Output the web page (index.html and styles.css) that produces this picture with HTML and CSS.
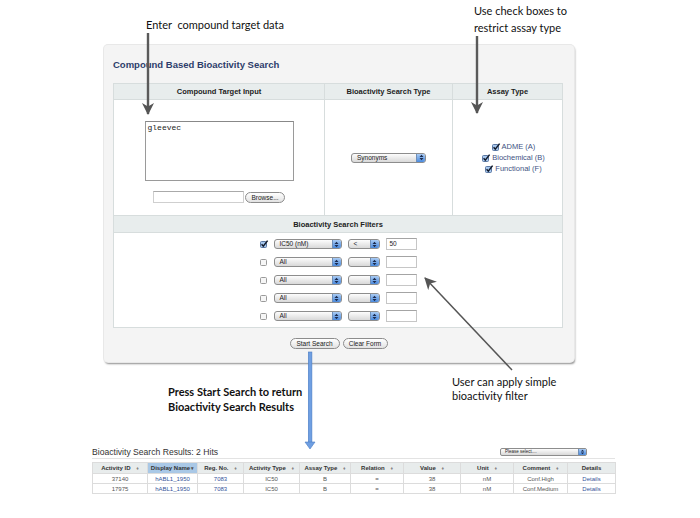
FILE: index.html
```html
<!DOCTYPE html>
<html>
<head>
<meta charset="utf-8">
<title>Compound Based Bioactivity Search</title>
<link rel="stylesheet" href="styles.css">
</head>
<body>
<div class="page">
  <div class="note note-enter">Enter&nbsp; compound target data</div>
  <div class="note note-use">Use check boxes to<br>restrict assay type</div>
  <div class="note note-press">Press Start Search to return<br>Bioactivity Search Results</div>
  <div class="note note-user">User can apply simple<br>bioactivity filter</div>

  <div class="panel">
    <h1 class="panel-title">Compound Based Bioactivity Search</h1>
    <div class="grid">
      <div class="hd">Compound Target Input</div>
      <div class="hd">Bioactivity Search Type</div>
      <div class="hd">Assay Type</div>

      <div class="cell input-cell">
        <div class="textarea">gleevec</div>
        <div class="file-row"><div class="file-box"></div><div class="btn btn-browse">Browse...</div></div>
      </div>
      <div class="cell center-cell">
        <div class="sel sel-syn"><span class="sel-text">Synonyms</span><span class="step"><svg width="5" height="7" viewBox="0 0 5 7"><path d="M0.5 3 L2.5 0.8 L4.5 3 Z M0.5 4 L2.5 6.2 L4.5 4 Z" fill="#1b2a4d"/></svg></span></div>
      </div>
      <div class="cell center-cell assay-cell">
        <div class="checks">
          <div class="chk-line"><svg class="cb" width="8" height="8" viewBox="0 0 8 8"><rect x="0.5" y="1.5" width="6" height="6" rx="1" fill="#a8c8ee" stroke="#5b78a3"/><path d="M1.6 4.3 L3.3 6.2 L7.6 0.6" fill="none" stroke="#101828" stroke-width="1.5"/></svg>ADME (A)</div>
          <div class="chk-line"><svg class="cb" width="8" height="8" viewBox="0 0 8 8"><rect x="0.5" y="1.5" width="6" height="6" rx="1" fill="#a8c8ee" stroke="#5b78a3"/><path d="M1.6 4.3 L3.3 6.2 L7.6 0.6" fill="none" stroke="#101828" stroke-width="1.5"/></svg>Biochemical (B)</div>
          <div class="chk-line"><svg class="cb" width="8" height="8" viewBox="0 0 8 8"><rect x="0.5" y="1.5" width="6" height="6" rx="1" fill="#a8c8ee" stroke="#5b78a3"/><path d="M1.6 4.3 L3.3 6.2 L7.6 0.6" fill="none" stroke="#101828" stroke-width="1.5"/></svg>Functional (F)</div>
        </div>
      </div>

      <div class="hd hd-wide">Bioactivity Search Filters</div>
      <div class="filters">
        <div class="frow">
          <svg class="cb" width="8" height="8" viewBox="0 0 8 8"><rect x="0.5" y="1.5" width="6" height="6" rx="1" fill="#a8c8ee" stroke="#5b78a3"/><path d="M1.6 4.3 L3.3 6.2 L7.6 0.6" fill="none" stroke="#101828" stroke-width="1.5"/></svg>
          <div class="sel sel-a"><span class="sel-text">IC50 (nM)</span><span class="step"><svg width="5" height="7" viewBox="0 0 5 7"><path d="M0.5 3 L2.5 0.8 L4.5 3 Z M0.5 4 L2.5 6.2 L4.5 4 Z" fill="#1b2a4d"/></svg></span></div>
          <div class="sel sel-b"><span class="sel-text">&lt;</span><span class="step"><svg width="5" height="7" viewBox="0 0 5 7"><path d="M0.5 3 L2.5 0.8 L4.5 3 Z M0.5 4 L2.5 6.2 L4.5 4 Z" fill="#1b2a4d"/></svg></span></div>
          <div class="fin">50</div>
        </div>
        <div class="frow">
          <svg class="cb" width="8" height="8" viewBox="0 0 8 8"><rect x="0.5" y="1.5" width="6" height="6" rx="1" fill="#f6f6f6" stroke="#9a9a9a"/></svg>
          <div class="sel sel-a"><span class="sel-text">All</span><span class="step"><svg width="5" height="7" viewBox="0 0 5 7"><path d="M0.5 3 L2.5 0.8 L4.5 3 Z M0.5 4 L2.5 6.2 L4.5 4 Z" fill="#1b2a4d"/></svg></span></div>
          <div class="sel sel-b"><span class="sel-text"></span><span class="step"><svg width="5" height="7" viewBox="0 0 5 7"><path d="M0.5 3 L2.5 0.8 L4.5 3 Z M0.5 4 L2.5 6.2 L4.5 4 Z" fill="#1b2a4d"/></svg></span></div>
          <div class="fin"></div>
        </div>
        <div class="frow">
          <svg class="cb" width="8" height="8" viewBox="0 0 8 8"><rect x="0.5" y="1.5" width="6" height="6" rx="1" fill="#f6f6f6" stroke="#9a9a9a"/></svg>
          <div class="sel sel-a"><span class="sel-text">All</span><span class="step"><svg width="5" height="7" viewBox="0 0 5 7"><path d="M0.5 3 L2.5 0.8 L4.5 3 Z M0.5 4 L2.5 6.2 L4.5 4 Z" fill="#1b2a4d"/></svg></span></div>
          <div class="sel sel-b"><span class="sel-text"></span><span class="step"><svg width="5" height="7" viewBox="0 0 5 7"><path d="M0.5 3 L2.5 0.8 L4.5 3 Z M0.5 4 L2.5 6.2 L4.5 4 Z" fill="#1b2a4d"/></svg></span></div>
          <div class="fin"></div>
        </div>
        <div class="frow">
          <svg class="cb" width="8" height="8" viewBox="0 0 8 8"><rect x="0.5" y="1.5" width="6" height="6" rx="1" fill="#f6f6f6" stroke="#9a9a9a"/></svg>
          <div class="sel sel-a"><span class="sel-text">All</span><span class="step"><svg width="5" height="7" viewBox="0 0 5 7"><path d="M0.5 3 L2.5 0.8 L4.5 3 Z M0.5 4 L2.5 6.2 L4.5 4 Z" fill="#1b2a4d"/></svg></span></div>
          <div class="sel sel-b"><span class="sel-text"></span><span class="step"><svg width="5" height="7" viewBox="0 0 5 7"><path d="M0.5 3 L2.5 0.8 L4.5 3 Z M0.5 4 L2.5 6.2 L4.5 4 Z" fill="#1b2a4d"/></svg></span></div>
          <div class="fin"></div>
        </div>
        <div class="frow">
          <svg class="cb" width="8" height="8" viewBox="0 0 8 8"><rect x="0.5" y="1.5" width="6" height="6" rx="1" fill="#f6f6f6" stroke="#9a9a9a"/></svg>
          <div class="sel sel-a"><span class="sel-text">All</span><span class="step"><svg width="5" height="7" viewBox="0 0 5 7"><path d="M0.5 3 L2.5 0.8 L4.5 3 Z M0.5 4 L2.5 6.2 L4.5 4 Z" fill="#1b2a4d"/></svg></span></div>
          <div class="sel sel-b"><span class="sel-text"></span><span class="step"><svg width="5" height="7" viewBox="0 0 5 7"><path d="M0.5 3 L2.5 0.8 L4.5 3 Z M0.5 4 L2.5 6.2 L4.5 4 Z" fill="#1b2a4d"/></svg></span></div>
          <div class="fin"></div>
        </div>
      </div>
    </div>
    <div class="actions">
      <div class="btn btn-start">Start Search</div>
      <div class="btn btn-clear">Clear Form</div>
    </div>
  </div>

  <div class="results">
    <div class="res-head">
      <div class="res-title">Bioactivity Search Results: 2 Hits</div>
      <div class="sel sel-please"><span class="sel-text">Please select....</span><span class="step"><svg width="5" height="6" viewBox="0 0 5 7"><path d="M0.5 3 L2.5 0.8 L4.5 3 Z M0.5 4 L2.5 6.2 L4.5 4 Z" fill="#1b2a4d"/></svg></span></div>
    </div>
    <table class="rtable">
      <colgroup>
        <col class="c55"><col class="c50"><col class="c46"><col class="c56"><col class="c51"><col class="c53"><col class="c57"><col class="c53"><col class="c54"><col class="c48">
      </colgroup>
      <thead>
        <tr>
          <th>Activity ID <span class="sort">&#9830;</span></th>
          <th class="th-active">Display Name<span class="sort-on">&#9662;</span></th>
          <th>Reg. No. <span class="sort">&#9830;</span></th>
          <th>Activity Type <span class="sort">&#9830;</span></th>
          <th>Assay Type <span class="sort">&#9830;</span></th>
          <th>Relation <span class="sort">&#9830;</span></th>
          <th>Value <span class="sort">&#9830;</span></th>
          <th>Unit <span class="sort">&#9830;</span></th>
          <th>Comment <span class="sort">&#9830;</span></th>
          <th>Details</th>
        </tr>
      </thead>
      <tbody>
        <tr>
          <td>37140</td><td class="lnk">hABL1_1950</td><td class="lnk">7083</td><td>IC50</td><td>B</td><td>=</td><td>38</td><td>nM</td><td>Conf.High</td><td class="lnk">Details</td>
        </tr>
        <tr>
          <td>17975</td><td class="lnk">hABL1_1950</td><td class="lnk">7083</td><td>IC50</td><td>B</td><td>=</td><td>38</td><td>nM</td><td>Conf.Medium</td><td class="lnk">Details</td>
        </tr>
      </tbody>
    </table>
  </div>

  <svg class="arrows" width="700" height="518" viewBox="0 0 700 518">
    <defs>
      <marker id="ah" viewBox="0 0 12 12" refX="11" refY="6" markerWidth="12" markerHeight="12" markerUnits="userSpaceOnUse" orient="auto">
        <path d="M0 0 L12 6 L0 12 L3.5 6 Z" fill="#555"/>
      </marker>
    </defs>
    <line x1="148" y1="33" x2="148" y2="114" stroke="#5a5a5a" stroke-width="2.4" marker-end="url(#ah)"/>
    <line x1="477" y1="36" x2="477" y2="113" stroke="#5a5a5a" stroke-width="2.4" marker-end="url(#ah)"/>
    <line x1="512" y1="370" x2="425" y2="278" stroke="#555" stroke-width="1.5" marker-end="url(#ah)"/>
    <rect x="308.3" y="352" width="3.6" height="91" fill="#6f9fe2" stroke="#4a7cc4" stroke-width="0.6"/>
    <path d="M305 442 L315 442 L310 449 Z" fill="#6f9fe2" stroke="#4a7cc4" stroke-width="0.6"/>
  </svg>
</div>
</body>
</html>
```

FILE: styles.css
```css
* { box-sizing: border-box; }

body {
  margin: 0;
  background: #fff;
  font-family: "Liberation Sans", Arial, sans-serif;
  color: #222;
}

.page {
  position: relative;
  width: 700px;
  height: 518px;
  overflow: hidden;
  padding-top: 45px;
}

/* callout annotations on the canvas */
.note {
  position: absolute;
  font-family: Lato, "Liberation Sans", sans-serif;
  font-size: 11px;
  color: #111;
  white-space: nowrap;
}
.note-enter { left: 146px; top: 18px; line-height: 14px; }
.note-use { left: 474px; top: 3px; line-height: 16.5px; }
.note-press { left: 168px; top: 385px; line-height: 14.5px; font-weight: bold; }
.note-user { left: 452px; top: 375px; line-height: 14px; }

.arrows {
  position: absolute;
  left: 0;
  top: 0;
  pointer-events: none;
}

/* search panel */
.panel {
  margin-left: 104px;
  width: 470px;
  height: 317px;
  padding: 14px 11px 0 9px;
  background: #f4f4f4;
  border-radius: 4px;
  box-shadow: 0 0 0 1px #e8e8e8, 1px 2px 2px rgba(0, 0, 0, 0.45);
}

.panel-title {
  margin: 0 0 12px;
  font-size: 9.5px;
  line-height: 12px;
  font-weight: bold;
  color: #2d3d6b;
}

.grid {
  display: grid;
  grid-template-columns: 210px 127px 1fr;
  grid-template-rows: 15px 115px 16px 94px;
  gap: 1px;
  background: #d7dddd;
  border: 1px solid #d7dddd;
}

.hd {
  background: #e8eded;
  font-size: 7.5px;
  font-weight: bold;
  color: #222;
  display: flex;
  align-items: center;
  justify-content: center;
}
.hd-wide { grid-column: 1 / -1; }

.cell { background: #fff; }

.input-cell {
  display: flex;
  flex-direction: column;
  align-items: center;
  padding-top: 21px;
}

.textarea {
  width: 149px;
  height: 60px;
  border: 1px solid #9a9a9a;
  border-top-color: #888;
  padding: 1px 2px;
  font-family: "Liberation Mono", monospace;
  font-size: 8px;
  line-height: 9px;
  color: #222;
  background: #fff;
}

.file-row {
  margin-top: 10px;
  display: flex;
  align-items: center;
  gap: 1px;
}

.file-box {
  width: 91px;
  height: 12px;
  border: 1px solid #cfcfcf;
  border-top-color: #aaa;
  background: #fff;
}

.btn {
  height: 11px;
  border: 1px solid #8c8c8c;
  border-radius: 6px;
  background: linear-gradient(#ffffff, #e2e2e2);
  font-size: 6.5px;
  line-height: 9px;
  color: #222;
  display: flex;
  align-items: center;
  justify-content: center;
  white-space: nowrap;
}
.btn-browse { width: 40px; }
.btn-start { width: 50px; }
.btn-clear { width: 45px; }

.center-cell {
  display: flex;
  align-items: center;
  justify-content: center;
}
.assay-cell { padding-left: 12px; }

.sel {
  display: flex;
  align-items: center;
  height: 10px;
  border: 1px solid #8d8d8d;
  border-radius: 3px;
  background: linear-gradient(#fdfdfd, #d9d9d9);
  font-size: 6.5px;
  color: #222;
  overflow: hidden;
}
.sel-text {
  flex: 1;
  padding-left: 5px;
  line-height: 8px;
  white-space: nowrap;
  overflow: hidden;
}
.step {
  width: 9px;
  align-self: stretch;
  background: linear-gradient(#a9cbf4, #4a8ade);
  border-left: 1px solid #6f8fb8;
  display: flex;
  align-items: center;
  justify-content: center;
}
.sel-syn { width: 75px; }
.sel-a { width: 68px; }
.sel-b { width: 32px; }

.checks {
  display: flex;
  flex-direction: column;
  align-items: center;
  gap: 2px;
  font-size: 7.5px;
  color: #3e5283;
}
.chk-line {
  display: flex;
  align-items: center;
  gap: 2px;
  height: 9px;
  white-space: nowrap;
}
.cb { overflow: visible; flex: none; }

.filters {
  grid-column: 1 / -1;
  background: #fff;
  display: flex;
  flex-direction: column;
  align-items: center;
  gap: 6px;
  padding-top: 5px;
}
.frow {
  display: flex;
  align-items: center;
  gap: 6px;
  height: 12px;
}
.fin {
  width: 31px;
  height: 12px;
  border: 1px solid #c6c6c6;
  border-top-color: #a4a4a4;
  background: #fff;
  font-size: 6.5px;
  line-height: 10px;
  padding-left: 3px;
  color: #222;
}

.actions {
  display: flex;
  justify-content: center;
  gap: 3px;
  margin-top: 10px;
  width: 451px;
}

/* results */
.results {
  margin: 84px 0 0 92px;
  width: 523px;
}
.res-head {
  display: flex;
  justify-content: space-between;
  align-items: center;
  height: 13px;
  border-bottom: 1px solid #e3e3e3;
  padding-right: 28px;
  padding-bottom: 1px;
}
.res-title {
  font-size: 8.6px;
  color: #333;
}
.sel-please {
  width: 87px;
  height: 8px;
  font-size: 4.5px;
  border-radius: 2px;
}
.sel-please .sel-text { line-height: 6px; padding-left: 4px; }
.sel-please .step { width: 8px; }

.rtable {
  margin-top: 3px;
  width: 523px;
  border-collapse: collapse;
  table-layout: fixed;
  font-size: 6px;
}
.c55 { width: 55px; }
.c50 { width: 50px; }
.c46 { width: 46px; }
.c56 { width: 56px; }
.c51 { width: 51px; }
.c53 { width: 53px; }
.c57 { width: 57px; }
.c54 { width: 54px; }
.c48 { width: 48px; }

.rtable th,
.rtable td {
  border: 1px solid #dcdcdc;
  padding: 0;
  text-align: center;
  white-space: nowrap;
  overflow: hidden;
}
.rtable th {
  height: 11px;
  background: #e8ecec;
  font-weight: bold;
  color: #333;
}
.rtable th.th-active { background: #a9c8e6; }
.rtable td {
  height: 10px;
  color: #555;
}
.rtable td.lnk { color: #34539a; }
.sort { color: #888; font-size: 5px; margin-left: 4px; }
.sort-on { color: #555; font-size: 5px; margin-left: 1px; }
```
